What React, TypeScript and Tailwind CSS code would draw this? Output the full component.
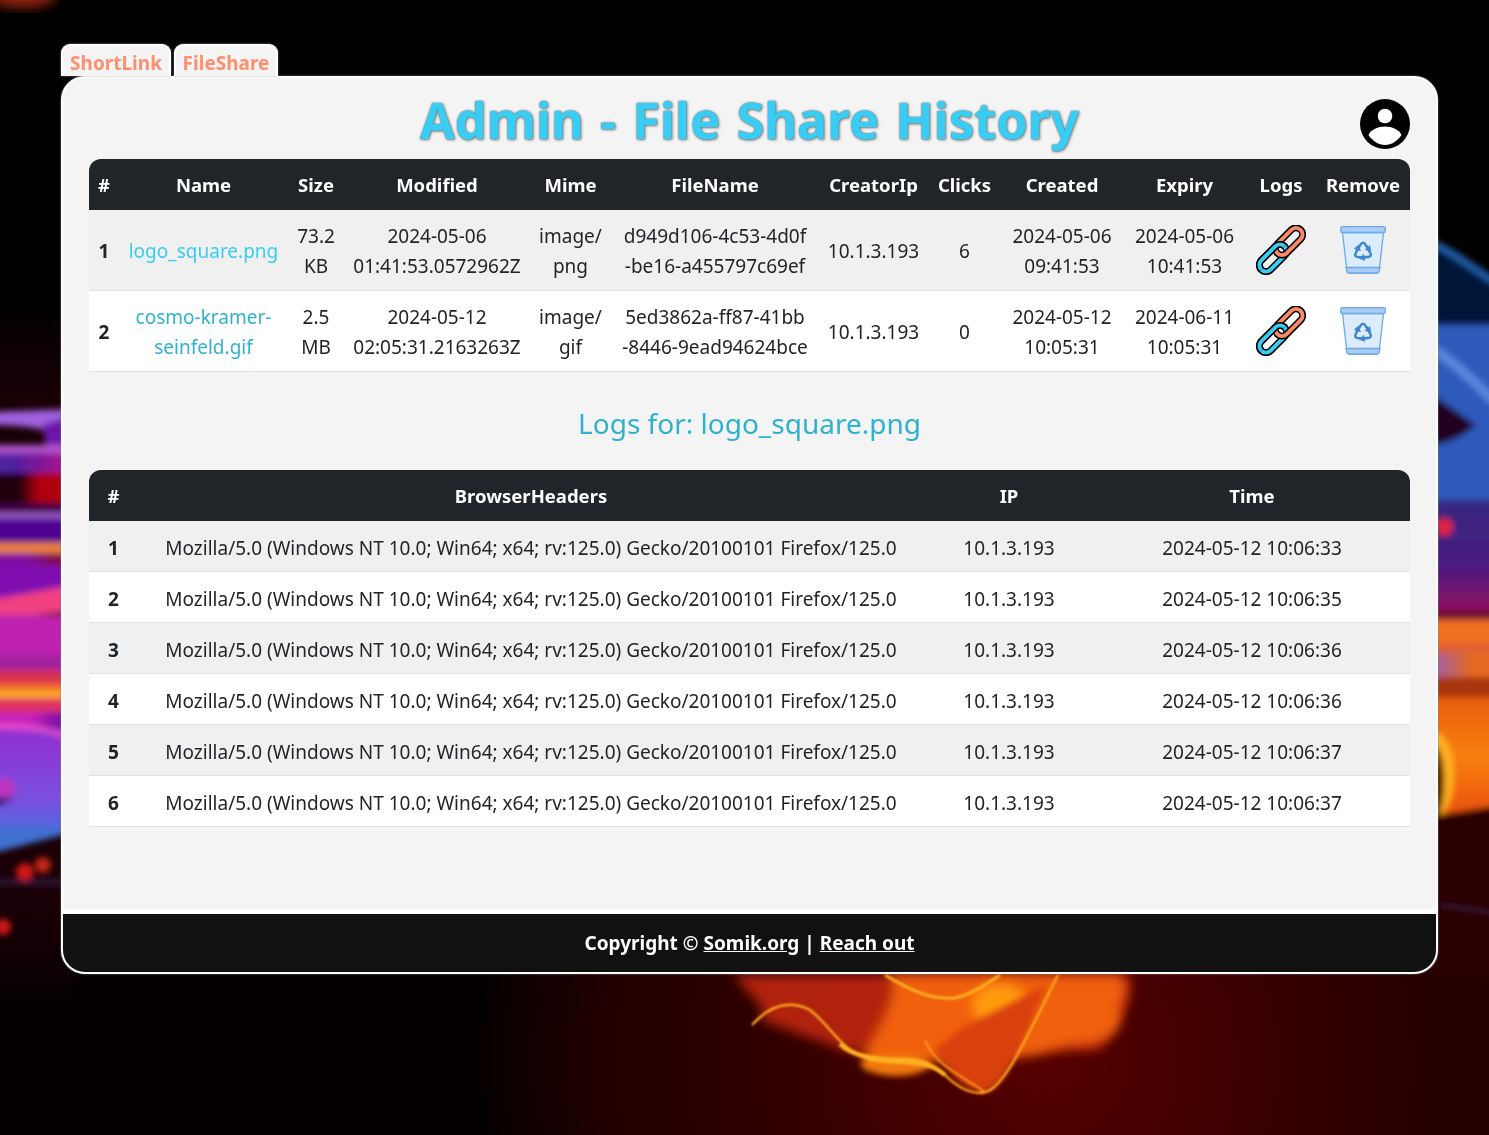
import { useId } from "react";

const files = [
  {
    id: 1,
    name: ["logo_square.png"],
    size: ["73.2", "KB"],
    modified: ["2024-05-06", "01:41:53.0572962Z"],
    mime: ["image/", "png"],
    fileName: ["d949d106-4c53-4d0f", "-be16-a455797c69ef"],
    ip: "10.1.3.193",
    clicks: 6,
    created: ["2024-05-06", "09:41:53"],
    expiry: ["2024-05-06", "10:41:53"],
  },
  {
    id: 2,
    name: ["cosmo-kramer-", "seinfeld.gif"],
    size: ["2.5", "MB"],
    modified: ["2024-05-12", "02:05:31.2163263Z"],
    mime: ["image/", "gif"],
    fileName: ["5ed3862a-ff87-41bb", "-8446-9ead94624bce"],
    ip: "10.1.3.193",
    clicks: 0,
    created: ["2024-05-12", "10:05:31"],
    expiry: ["2024-06-11", "10:05:31"],
  },
];

const logTimes = ["10:06:33", "10:06:35", "10:06:36", "10:06:36", "10:06:37", "10:06:37"];
const agent = "Mozilla/5.0 (Windows NT 10.0; Win64; x64; rv:125.0) Gecko/20100101 Firefox/125.0";
const fileHeaders = ["#", "Name", "Size", "Modified", "Mime", "FileName", "CreatorIp", "Clicks", "Created", "Expiry", "Logs", "Remove"];
const fileCols = [30, 169, 56, 186, 81, 208, 109, 73, 122, 123, 70, 94];

function Lines({ lines }: { lines: string[] }) {
  return (
    <>
      {lines.map((line) => (
        <span key={line} className="block whitespace-nowrap">
          {line}
        </span>
      ))}
    </>
  );
}

function LinkIcon() {
  const clip = useId();
  const orange = (
    <g transform="rotate(-45 33 16.5)">
      <rect x="16.5" y="9.9" width="33" height="13.2" rx="6.6" fill="none" stroke="#000" strokeWidth="7" />
      <rect x="16.5" y="9.9" width="33" height="13.2" rx="6.6" fill="none" stroke="#fb8a68" strokeWidth="3.9" />
    </g>
  );
  const blue = (
    <g transform="rotate(-45 17 33)">
      <rect x="0.5" y="26.4" width="33" height="13.2" rx="6.6" fill="none" stroke="#000" strokeWidth="7" />
      <rect x="0.5" y="26.4" width="33" height="13.2" rx="6.6" fill="none" stroke="#38cdf4" strokeWidth="3.9" />
    </g>
  );
  return (
    <svg viewBox="0 0 50 50" className="mx-auto block h-[50px] w-[50px]">
      <defs>
        <clipPath id={clip}>
          <path d="M0 0H50L0 50Z" />
        </clipPath>
      </defs>
      {blue}
      {orange}
      <g clipPath={`url(#${clip})`}>{blue}</g>
    </svg>
  );
}

function TrashIcon() {
  const arrow = (
    <g>
      <path d="M-6.5 -0.5L-2 -7.5Q0 -10 2 -7.5L3.5 -5" fill="none" stroke="#3f86cf" strokeWidth="2.4" strokeLinecap="round" strokeLinejoin="round" />
      <path d="M6.8 -6L2 -1.8L7.8 -0.6Z" fill="#3f86cf" stroke="#3f86cf" strokeWidth="0.6" strokeLinejoin="round" />
    </g>
  );
  return (
    <svg viewBox="0 0 46 48" className="mx-auto block h-[48px] w-[46px]">
      <path d="M2.5 6.500H43.500L39 45.500Q38.800 47 37 47H9Q7.200 47 7 45.500Z" fill="#dcecff" stroke="#6ea8e8" strokeWidth="1.3" />
      <path d="M6 41.500H40L39 45.500Q38.800 47 37 47H9Q7.200 47 7 45.500Z" fill="#a9cdf5" stroke="#6ea8e8" strokeWidth="1.3" />
      <rect x="0.7" y="0.7" width="44.6" height="5.8" rx="1.5" fill="#a9cdf5" stroke="#6ea8e8" strokeWidth="1.3" />
      <g transform="translate(23 25.500)">
        {arrow}
        <g transform="rotate(120)">{arrow}</g>
        <g transform="rotate(240)">{arrow}</g>
      </g>
    </svg>
  );
}

function UserIcon() {
  return (
    <svg viewBox="0 0 50 50" className="block h-[50px] w-[50px]">
      <circle cx="25" cy="25" r="25" fill="#000" />
      <circle cx="25" cy="17" r="7.3" fill="#fff" />
      <path d="M8.5 36C11 30.500 18 27.500 25 27.500C32 27.500 39 30.500 41.500 36C37.500 42 31.500 46 25 46C18.500 46 12.500 42 8.500 36Z" fill="#fff" />
    </svg>
  );
}

function Backdrop() {
  return (
    <svg viewBox="0 0 1489 1135" className="fixed inset-0 -z-10 h-[1135px] w-[1489px]">
      <defs>
        <filter id="soft" x="-20%" y="-20%" width="140%" height="140%">
          <feGaussianBlur stdDeviation="3" />
        </filter>
        <filter id="softer" x="-20%" y="-20%" width="140%" height="140%">
          <feGaussianBlur stdDeviation="6" />
        </filter>
        <filter id="wisp">
          <feGaussianBlur stdDeviation="0.9" />
        </filter>
        <radialGradient id="floor" gradientUnits="userSpaceOnUse" cx="1050" cy="1060" r="600">
          <stop offset="0" stopColor="#560000" />
          <stop offset="0.5" stopColor="#2e0000" />
          <stop offset="0.75" stopColor="#220000" />
          <stop offset="0.95" stopColor="#050000" />
        </radialGradient>
        <linearGradient id="dusk" gradientUnits="userSpaceOnUse" x1="0" x2="0" y1="300" y2="1010">
          <stop offset="0" stopColor="#000" />
          <stop offset="0.15" stopColor="#1a0006" />
          <stop offset="0.85" stopColor="#1a0006" />
          <stop offset="1" stopColor="#040000" />
        </linearGradient>
        <linearGradient id="la" gradientUnits="userSpaceOnUse" x1="0" x2="64" y1="0" y2="0">
          <stop offset="0.2" stopColor="#5020a0" />
          <stop offset="1" stopColor="#a81090" />
        </linearGradient>
        <linearGradient id="lb" gradientUnits="userSpaceOnUse" x1="0" x2="64" y1="0" y2="0">
          <stop offset="0.3" stopColor="#200010" />
          <stop offset="0.6" stopColor="#b00010" />
        </linearGradient>
        <linearGradient id="lc" gradientUnits="userSpaceOnUse" x1="0" x2="64" y1="0" y2="0">
          <stop offset="0.4" stopColor="#8010a0" />
          <stop offset="1" stopColor="#801030" />
        </linearGradient>
        <linearGradient id="ld" gradientUnits="userSpaceOnUse" x1="0" x2="64" y1="0" y2="0">
          <stop offset="0.5" stopColor="#c820b8" />
          <stop offset="1" stopColor="#7010a0" />
        </linearGradient>
        <linearGradient id="ra" gradientUnits="userSpaceOnUse" x1="1436" x2="1489" y1="0" y2="0">
          <stop offset="0" stopColor="#a060a0" />
          <stop offset="0.7" stopColor="#e86a20" />
        </linearGradient>
        <linearGradient id="rb" gradientUnits="userSpaceOnUse" x1="0" x2="0" y1="500" y2="610">
          <stop offset="0" stopColor="#36287f" />
          <stop offset="0.6" stopColor="#4a1a80" />
          <stop offset="1" stopColor="#901060" />
        </linearGradient>
        <linearGradient id="rc" gradientUnits="userSpaceOnUse" x1="0" x2="0" y1="697" y2="816">
          <stop offset="0" stopColor="#e85c10" />
          <stop offset="0.5" stopColor="#f88010" />
          <stop offset="1" stopColor="#e85008" />
        </linearGradient>
        <linearGradient id="lp" gradientUnits="userSpaceOnUse" x1="0" x2="0" y1="733" y2="830">
          <stop offset="0" stopColor="#9030d0" />
          <stop offset="0.7" stopColor="#7a50e0" />
          <stop offset="1" stopColor="#4f68dc" />
        </linearGradient>
      </defs>
      <rect width="1489" height="1135" fill="#000" />
      <rect y="950" width="1489" height="185" fill="url(#floor)" />
      <ellipse cx="22" cy="-4" rx="34" ry="12" fill="#902010" filter="url(#softer)" />

      <rect x="-10" y="300" width="84" height="720" fill="url(#dusk)" />
      <g filter="url(#soft)">
        <path d="M-10 412L74 409V440C55 436 50 425-10 425Z" fill="#a060e0" />
        <path d="M42 425L74 415V446H46Z" fill="#6a18a8" />
        <rect x="-10" y="445" width="84" height="8" fill="#b455d0" />
        <rect x="-10" y="453" width="84" height="20" fill="url(#la)" />
        <rect x="-10" y="473" width="84" height="30" fill="url(#lb)" />
        <rect x="-10" y="503" width="84" height="10" fill="#400040" />
        <rect x="-10" y="513" width="84" height="5" fill="#a060d0" />
        <rect x="-10" y="518" width="84" height="25" fill="#500090" />
        <rect x="-10" y="543" width="84" height="10" fill="#f08030" />
        <rect x="-10" y="553" width="84" height="12" fill="url(#lc)" />
        <rect x="-10" y="565" width="84" height="40" fill="#8010b0" />
        <path d="M-10 600L74 585V612L-10 618Z" fill="#f04080" />
        <rect x="-10" y="615" width="84" height="40" fill="#c020b0" />
        <rect x="-10" y="655" width="84" height="15" fill="#a020a0" />
        <rect x="-10" y="670" width="84" height="13" fill="#d83050" />
        <rect x="-10" y="683" width="84" height="7" fill="#f06030" />
        <rect x="-10" y="690" width="84" height="8" fill="#ffa820" />
        <rect x="-10" y="698" width="84" height="14" fill="#e03060" />
        <rect x="-10" y="712" width="84" height="18" fill="url(#ld)" />
        <rect x="-10" y="730" width="84" height="100" fill="url(#lp)" />
        <path d="M-10 727C20 724 50 730 74 738" fill="none" stroke="#ff60e0" strokeWidth="3" />
        <circle cx="5" cy="788" r="10" fill="#c030c0" />
        <path d="M-10 798H16L-10 810Z" fill="#2a1060" />
        <path d="M-10 828H74V832L-10 854Z" fill="#4070d0" />
        <rect x="-10" y="880" width="84" height="4" fill="#302050" />
        <circle cx="25" cy="872" r="9" fill="#d01818" />
        <circle cx="43" cy="865" r="8" fill="#c82818" />
        <circle cx="3" cy="927" r="8" fill="#d01818" />
      </g>

      <g filter="url(#soft)">
        <path d="M1430 240C1450 248 1470 263 1495 280V330H1430Z" fill="#041838" />
        <path d="M1430 242C1450 250 1470 265 1495 282" fill="none" stroke="#2060b0" strokeWidth="7" />
        <rect x="1430" y="325" width="70" height="175" fill="#2f5abc" />
        <path d="M1430 348C1450 358 1470 378 1495 402" fill="none" stroke="#5b8ae0" strokeWidth="9" />
        <path d="M1430 393L1476 425C1460 440 1440 445 1430 445Z" fill="#200020" />
        <rect x="1430" y="500" width="70" height="110" fill="url(#rb)" />
        <circle cx="1444" cy="527" r="9" fill="#e02040" />
        <rect x="1430" y="610" width="70" height="10" fill="#701030" />
        <rect x="1430" y="620" width="70" height="23" fill="#f07020" />
        <rect x="1430" y="643" width="70" height="10" fill="#e06030" />
        <rect x="1430" y="653" width="70" height="24" fill="url(#ra)" />
        <rect x="1430" y="677" width="70" height="20" fill="#a83410" />
        <rect x="1430" y="697" width="70" height="119" fill="url(#rc)" />
        <ellipse cx="1436" cy="775" rx="18" ry="42" fill="#ffb020" />
        <ellipse cx="1434" cy="782" rx="10" ry="36" fill="#3a0000" />
        <path d="M1430 816L1495 806V976H1430Z" fill="#2a0000" />
        <path d="M1440 905C1455 908 1475 908 1495 914" fill="none" stroke="#40204a" strokeWidth="2" />
      </g>

      <g>
        <path d="M735 975C750 1000 770 1005 760 1020L850 1052L1100 1050L1130 1000V975Z" fill="#b02008" filter="url(#softer)" />
        <path d="M890 975C900 1000 870 1040 862 1056C875 1072 905 1078 930 1062L1030 1056L1070 1045C1110 1046 1125 1030 1120 1005C1128 990 1125 980 1120 975Z" fill="#f06010" filter="url(#softer)" />
        <ellipse cx="1000" cy="1005" rx="28" ry="22" fill="#ff9a10" filter="url(#softer)" />
        <ellipse cx="895" cy="1064" rx="34" ry="11" fill="#f07810" filter="url(#soft)" />
        <path d="M935 1050C950 1075 965 1092 985 1092C1005 1088 1020 1050 1046 985L960 1030Z" fill="#d84008" filter="url(#soft)" />
        <g fill="none" filter="url(#wisp)">
          <path d="M752 1025C770 1005 790 1000 810 1010C830 1025 840 1050 870 1060C900 1065 925 1060 945 1075C960 1090 975 1095 985 1092C1005 1088 1030 1030 1058 975" stroke="#ffa820" strokeWidth="2.4" />
          <path d="M840 1044C855 1058 880 1060 900 1060C920 1060 932 1064 945 1075" stroke="#ffb020" strokeWidth="4.5" />
          <path d="M885 975C910 990 930 1000 955 998C970 995 985 985 1000 975" stroke="#ffb020" strokeWidth="3" />
          <path d="M925 1040C935 1065 960 1075 985 1092" stroke="#ff9a20" strokeWidth="2" />
        </g>
      </g>
    </svg>
  );
}

export default function App() {
  return (
    <div className="relative h-[1135px] overflow-hidden font-['Noto_Sans'] text-[19px] leading-[30px] text-[#212529]">
      <Backdrop />
      <div className="ml-[61px] w-[1377px] pt-[44px]">
        <div className="flex h-[32px] gap-[3px]">
          <a className="w-[110px] rounded-t-[9px] border-2 border-b-0 border-white bg-[#f4f4f4] text-center text-[19px] leading-[34px] font-bold text-[#ff8f6e] shadow-[0_0_2px_#999]">
            ShortLink
          </a>
          <a className="w-[104px] rounded-t-[9px] border-2 border-b-0 border-white bg-[#f4f4f4] text-center text-[19px] leading-[34px] font-bold text-[#ff8f6e] shadow-[0_0_2px_#999]">
            FileShare
          </a>
        </div>
        <main className="flex h-[898px] flex-col overflow-hidden rounded-[24px] border-2 border-white bg-[#f4f4f4] shadow-[0_0_2px_#888]">
          <header className="grid h-[81px] shrink-0 grid-cols-[50px_1fr_50px] px-[26px]">
            <div />
            <h1 className="self-center pt-[2px] text-center text-[50.5px] leading-[79px] font-bold whitespace-nowrap text-[#38cdf4] [word-spacing:3px] [text-shadow:0_0_2px_#666,1px_1px_3px_#888]">
              Admin - File Share History
            </h1>
            <div className="self-start pt-[21px]">
              <UserIcon />
            </div>
          </header>

          <div className="mx-[26px]">
            <table className="w-full table-fixed border-separate border-spacing-0">
              <colgroup>
                {fileCols.map((w, i) => (
                  <col key={i} style={{ width: w }} />
                ))}
              </colgroup>
              <thead>
                <tr>
                  {fileHeaders.map((h, i) => (
                    <th
                      key={h}
                      className={`h-[51px] bg-[#212529] text-center text-[18.5px] font-bold whitespace-nowrap text-white ${i === 0 ? "rounded-tl-[12px]" : ""} ${i === 11 ? "rounded-tr-[12px]" : ""}`}
                    >
                      {h}
                    </th>
                  ))}
                </tr>
              </thead>
              <tbody>
                {files.map((f, i) => (
                  <tr key={f.id} className={`text-center ${i % 2 === 0 ? "bg-[#f0f0f0]" : "bg-white"}`}>
                    <td className="h-[81px] border-b border-[#dee2e6] pt-[2px] font-bold">{f.id}</td>
                    <td className={`border-b border-[#dee2e6] pt-[2px] ${i === 0 ? "text-[#38cdf4]" : "text-[#2fb2d0]"}`}>
                      <Lines lines={f.name} />
                    </td>
                    <td className="border-b border-[#dee2e6] pt-[2px]"><Lines lines={f.size} /></td>
                    <td className="border-b border-[#dee2e6] pt-[2px]"><Lines lines={f.modified} /></td>
                    <td className="border-b border-[#dee2e6] pt-[2px]"><Lines lines={f.mime} /></td>
                    <td className="border-b border-[#dee2e6] pt-[2px]"><Lines lines={f.fileName} /></td>
                    <td className="border-b border-[#dee2e6] pt-[2px]">{f.ip}</td>
                    <td className="border-b border-[#dee2e6] pt-[2px]">{f.clicks}</td>
                    <td className="border-b border-[#dee2e6] pt-[2px]"><Lines lines={f.created} /></td>
                    <td className="border-b border-[#dee2e6] pt-[2px]"><Lines lines={f.expiry} /></td>
                    <td className="border-b border-[#dee2e6]"><LinkIcon /></td>
                    <td className="border-b border-[#dee2e6]"><TrashIcon /></td>
                  </tr>
                ))}
              </tbody>
            </table>
          </div>

          <h2 className="flex h-[98px] shrink-0 items-center justify-center pt-[4px] text-[28px] text-[#2fb2d0]">
            Logs for: logo_square.png
          </h2>

          <div className="mx-[26px]">
            <table className="w-full table-fixed border-separate border-spacing-0">
              <colgroup>
                <col className="w-[49px]" />
                <col className="w-[786px]" />
                <col className="w-[170px]" />
                <col className="w-[316px]" />
              </colgroup>
              <thead>
                <tr>
                  <th className="h-[51px] rounded-tl-[12px] bg-[#212529] text-[18.5px] font-bold text-white">#</th>
                  <th className="bg-[#212529] text-[18.5px] font-bold text-white">BrowserHeaders</th>
                  <th className="bg-[#212529] text-[18.5px] font-bold text-white">IP</th>
                  <th className="rounded-tr-[12px] bg-[#212529] text-[18.5px] font-bold text-white">Time</th>
                </tr>
              </thead>
              <tbody>
                {logTimes.map((t, i) => (
                  <tr key={i} className={`text-center ${i % 2 === 0 ? "bg-[#f0f0f0]" : "bg-white"}`}>
                    <td className="h-[51px] border-b border-[#dee2e6] pt-[4px] font-bold">{i + 1}</td>
                    <td className="border-b border-[#dee2e6] pt-[4px] whitespace-nowrap">{agent}</td>
                    <td className="border-b border-[#dee2e6] pt-[4px]">10.1.3.193</td>
                    <td className="border-b border-[#dee2e6] pt-[4px]">2024-05-12 {t}</td>
                  </tr>
                ))}
              </tbody>
            </table>
          </div>

          <footer className="mt-auto flex h-[63px] shrink-0 items-center justify-center border-t-[5px] border-white bg-[#111] font-bold text-white">
            <span>
              Copyright © <a className="underline">Somik.org</a> | <a className="underline">Reach out</a>
            </span>
          </footer>
        </main>
      </div>
    </div>
  );
}
